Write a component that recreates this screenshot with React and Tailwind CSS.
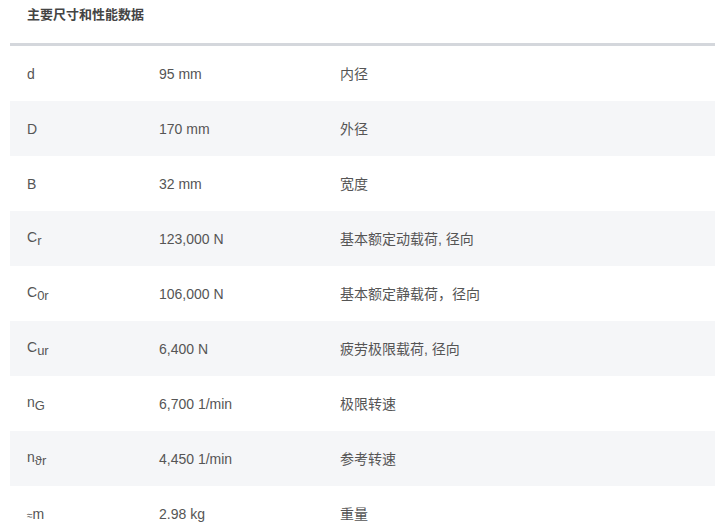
export default function App() {
  const s = "text-[13px] align-[-3px]";
  const rows = [
    [<>d</>, "95 mm", "内径"],
    [<>D</>, "170 mm", "外径"],
    [<>B</>, "32 mm", "宽度"],
    [<>C<span className={s}>r</span></>, "123,000 N", "基本额定动载荷, 径向"],
    [<>C<span className={s}>0r</span></>, "106,000 N", "基本额定静载荷，径向"],
    [<>C<span className={s}>ur</span></>, "6,400 N", "疲劳极限载荷, 径向"],
    [<>n<span className={s}>G</span></>, "6,700 1/min", "极限转速"],
    [<>n<span className={s}>ϑr</span></>, "4,450 1/min", "参考转速"],
    [<><span className="text-[10px]">≈</span>m</>, "2.98 kg", "重量"],
  ];
  return (
    <div className="w-[720px] h-[522px] overflow-hidden bg-white text-[#555] text-[14px]" style={{ fontFamily: '"Liberation Sans", Arial, "Noto Sans CJK SC", sans-serif' }}>
      <div className="h-[43px] pl-[27px] pt-[5px] font-bold text-[13px] text-[#444] leading-[20px]">主要尺寸和性能数据</div>
      <div className="ml-[10px] mr-[5px] border-t-[3px] border-[#d4d7dc]">
        {rows.map((r, i) => (
          <div key={i} className={`flex items-center h-[55px] leading-none ${i % 2 ? "bg-[#f5f6f8]" : ""}`}>
            <div className="w-[149px] pl-[17px]">{r[0]}</div>
            <div className="w-[181px]">{r[1]}</div>
            <div>{r[2]}</div>
          </div>
        ))}
      </div>
    </div>
  );
}
